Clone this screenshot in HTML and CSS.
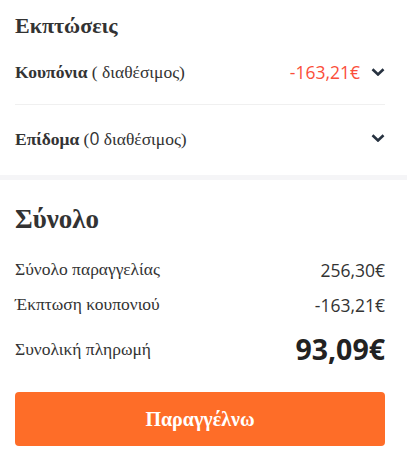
FILE: index.html
```html
<!DOCTYPE html>
<html>
<head>
    <title>Σύνολο</title>
    <link rel="stylesheet" href="styles.css">
</head>
<body>
<div class="section discounts">
  <h2 class="title gr">Εκπτώσεις</h2>
  <div class="row">
    <div class="label gr"><b>Κουπόνια</b> ( διαθέσιμος)</div>
    <div class="right">
      <span class="amount red">-163,21€</span>
      <svg class="chevron" viewBox="0 0 14 8" width="14" height="8"><path d="M1.5 1.3 L7 6.5 L12.5 1.3"/></svg>
    </div>
  </div>
  <div class="row">
    <div class="label gr"><b>Επίδομα</b> (<span class="num">0</span> διαθέσιμος)</div>
    <div class="right">
      <svg class="chevron" viewBox="0 0 14 8" width="14" height="8"><path d="M1.5 1.3 L7 6.5 L12.5 1.3"/></svg>
    </div>
  </div>
</div>

<div class="section total">
  <h2 class="title big gr">Σύνολο</h2>
  <div class="line">
    <span class="gr">Σύνολο παραγγελίας</span>
    <span class="amount">256,30€</span>
  </div>
  <div class="line">
    <span class="gr">Έκπτωση κουπονιού</span>
    <span class="amount">-163,21€</span>
  </div>
  <div class="line grand">
    <span class="gr">Συνολική πληρωμή</span>
    <span class="amount">93,09€</span>
  </div>
  <button class="order gr">Παραγγέλνω</button>
</div>
</body>
</html>
```

FILE: styles.css
```css
html, body {
  margin: 0;
  background: #fff;
}
body {
  font-family: "Open Sans", sans-serif;
  color: #333;
}
.gr {
  font-family: "Liberation Serif", "Times New Roman", serif;
}
.num {
  font-family: "Open Sans", sans-serif;
}
.section {
  padding: 12px 22px 0 15px;
}
.discounts {
  padding-bottom: 5px;
  border-bottom: 5px solid #f5f5f7;
}
.title {
  margin: 0;
  font-size: 22px;
  line-height: 28px;
  font-weight: bold;
  color: #333;
}
.title.big {
  font-size: 27px;
  line-height: 34px;
  margin-top: 10px;
}
.row {
  display: flex;
  align-items: center;
  justify-content: space-between;
  height: 64px;
  font-size: 17.5px;
}
.row + .row {
  border-top: 1px solid #f0f0f0;
  height: 65px;
}
.right {
  display: flex;
  align-items: center;
  gap: 11px;
}
.amount {
  font-size: 17.5px;
}
.red {
  color: #fb4e3a;
}
.chevron {
  display: block;
  fill: none;
  stroke: #273240;
  stroke-width: 2.6;
}
.line {
  display: flex;
  align-items: center;
  justify-content: space-between;
  height: 35px;
  font-size: 17.5px;
}
.line:first-of-type {
  margin-top: 16px;
}
.grand {
  height: 54px;
}
.grand .amount {
  font-size: 28.5px;
  font-weight: bold;
  color: #222;
}
.order {
  display: block;
  width: 100%;
  height: 54px;
  margin-top: 16px;
  border: none;
  border-radius: 4px;
  background: #fe6d28;
  color: #fff;
  font-size: 20px;
  font-weight: bold;
}
```
